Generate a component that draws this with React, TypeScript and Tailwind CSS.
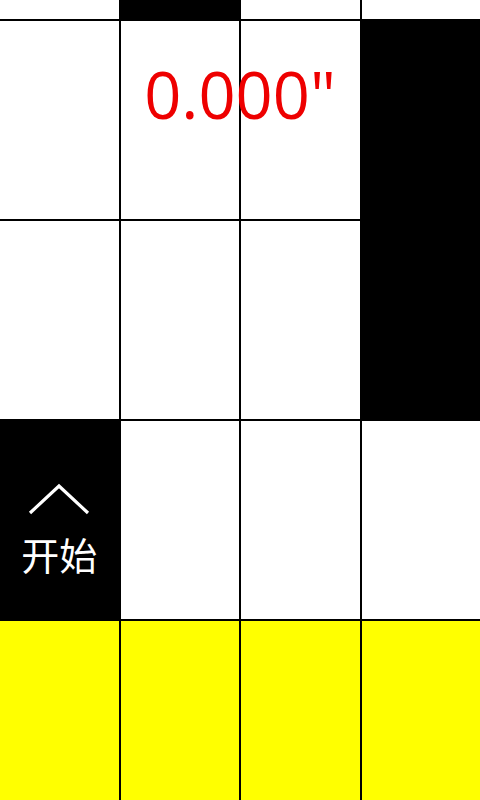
import React from "react";

type Tile = "w" | "b" | "y";

// rows top to bottom, 4 lanes each
const rows: Tile[][] = [
  ["w", "b", "w", "w"],
  ["w", "w", "w", "b"],
  ["w", "w", "w", "b"],
  ["b", "w", "w", "w"],
  ["y", "y", "y", "y"],
];

const heights = ["h-[19px]", "h-[198px]", "h-[198px]", "h-[198px]", "h-[179px]"];

function Cell({ t, start }: { t: Tile; start?: boolean }) {
  const bg = t === "b" ? "bg-black" : t === "y" ? "bg-[#ffff00]" : "bg-white";
  return (
    <div className={`${bg} flex flex-col items-center justify-center`}>
      {start && (
        <>
          <svg width="64" height="34" viewBox="0 0 64 34" className="mt-[14px]">
            <path d="M3 31 L32 4 L61 31" fill="none" stroke="white" strokeWidth="3.2" />
          </svg>
          <span
            className="text-white text-[38px] leading-none mt-[19px]"
            style={{ fontFamily: '"Noto Sans CJK SC", sans-serif' }}
          >
            开始
          </span>
        </>
      )}
    </div>
  );
}

export default function App() {
  return (
    <div className="relative w-[480px] h-[800px] overflow-hidden bg-black">
      <div className="flex flex-col gap-[2px]">
        {rows.map((r, i) => (
          <div key={i} className={`grid grid-cols-4 gap-[2px] ${heights[i]}`}>
            {r.map((t, j) => (
              <Cell key={j} t={t} start={i === 3 && j === 0} />
            ))}
          </div>
        ))}
      </div>
      {/* col 3 black tile spans two rows, hide the gap line */}
      <div className="absolute left-[360px] top-[219px] w-[120px] h-[2px] bg-black" />
      <div
        className="absolute left-0 right-0 top-[62px] text-center text-[#ee0000] text-[65px] leading-none"
        style={{ fontFamily: '"Open Sans", "Noto Sans", sans-serif' }}
      >
        0.000"
      </div>
    </div>
  );
}
